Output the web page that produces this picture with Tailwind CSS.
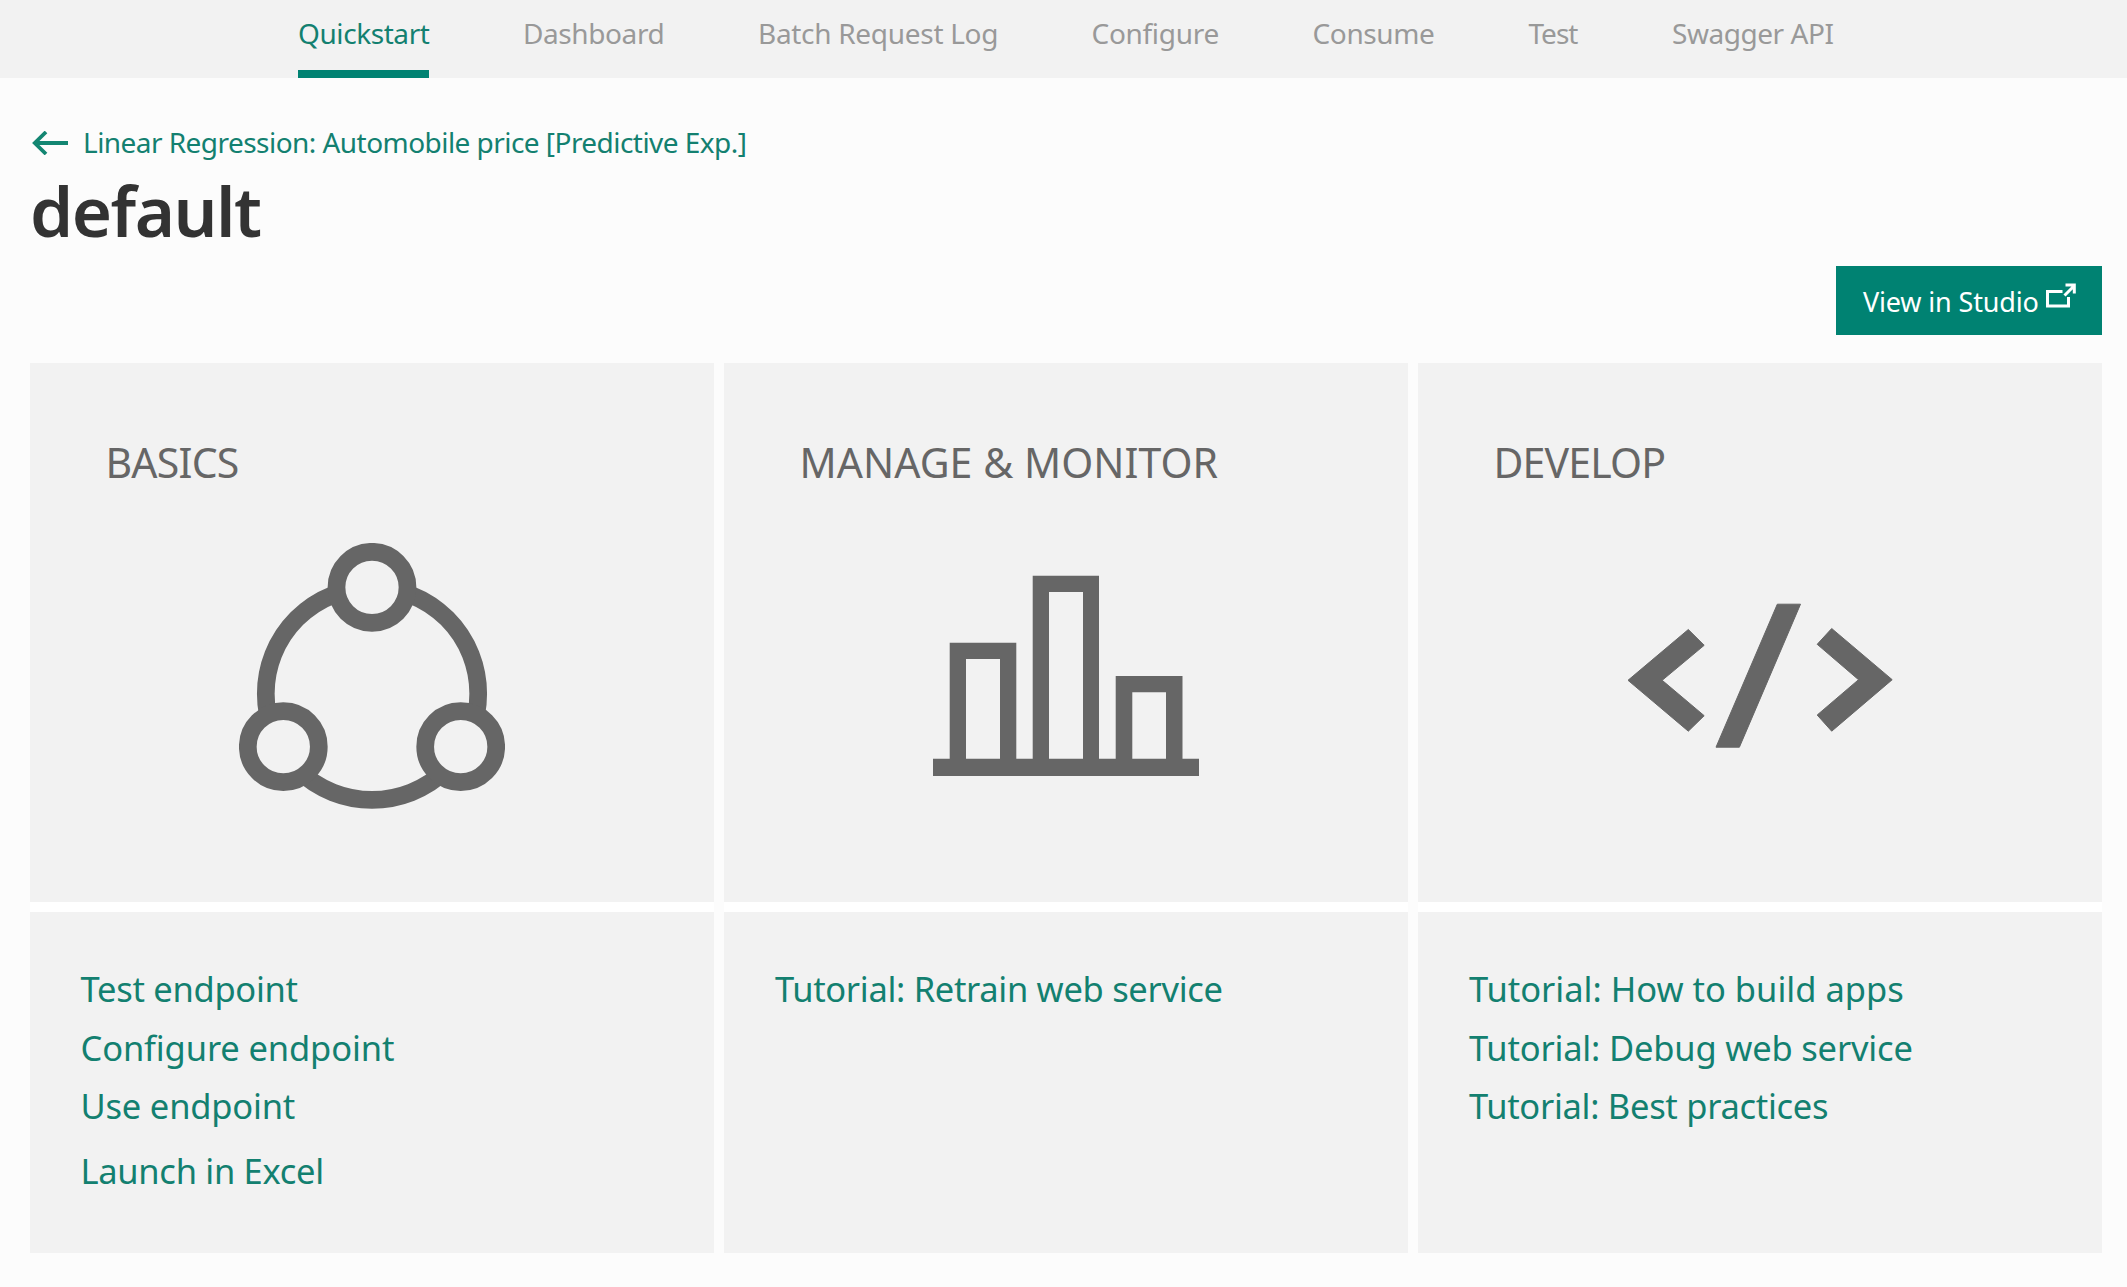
<!DOCTYPE html>
<html lang="en">
<head>
<meta charset="utf-8">
<title>default - Quickstart</title>
<script src="https://cdn.jsdelivr.net/npm/@tailwindcss/browser@4"></script>
</head>
<body class="min-h-screen bg-[#fcfcfc] font-['Noto_Sans',sans-serif] text-[#666666] whitespace-nowrap">
<nav class="grid h-[78px] grid-cols-[225px_235px_333.5px_221px_216px_143.5px_180px] bg-[#f2f2f2] pl-[298px] text-[28px] leading-[67px] text-[#999999]">
  <a class="h-[78px] w-[131px] border-b-8 border-[#008272] tracking-[-0.42px] text-[#138070]">Quickstart</a>
  <a class="tracking-[-0.4px]">Dashboard</a>
  <a class="tracking-[-0.3px]">Batch Request Log</a>
  <a class="tracking-[-0.3px]">Configure</a>
  <a class="tracking-[-0.38px]">Consume</a>
  <a class="tracking-[-1px]">Test</a>
  <a class="tracking-[-0.45px]">Swagger API</a>
</nav>
<main class="pl-[30px] pr-[25px] pt-11">
  <a class="flex h-10 items-center text-[28px] leading-10 tracking-[-0.545px] text-[#138070]">
    <svg class="ml-[2px] mr-[14px] mt-px h-6 w-9" viewBox="0 0 36 24" fill="none" stroke="#138672" stroke-width="3.8"><path d="M36 12H2.5M14 1 2.8 12 14 23"/></svg>
    <span class="pl-px">Linear Regression: Automobile price [Predictive Exp.]</span>
  </a>
  <h1 class="mt-2 h-20 text-[69px] font-semibold leading-[80px] tracking-[-1.5px] text-[#333333]">default</h1>
  <div class="mt-4 flex justify-end">
    <a class="flex h-[69px] w-[266px] bg-[#008272] pl-[27px] text-[27px] leading-[72px] tracking-[-0.16px] text-white">
      <span class="w-[183px]">View in Studio</span>
      <svg class="mt-[17px] h-[26px] w-[30px]" viewBox="0 0 30 26" fill="none" stroke="#fff" stroke-width="3"><path d="M16.5 8.5H1.5V23H22.5V14M18.5 12.5 27.5 3.5M19.5 2H28.3V10.5"/></svg>
    </a>
  </div>
  <div class="mt-7 grid grid-cols-3 gap-[10px]">
    <section class="flex flex-col gap-[10px] bg-white">
      <div class="h-[539px] bg-[#f2f2f2] pt-[71px]">
        <h2 class="pl-[75.5px] text-[41px] leading-[56px] tracking-[-0.78px]">BASICS</h2>
        <svg class="mx-auto mt-[53px] size-[266px]" viewBox="0 0 266 266" fill="#f2f2f2" stroke="#666666" stroke-width="17.7">
          <circle cx="133" cy="150.7" r="106.2"/><circle cx="133" cy="44.3" r="35.5"/><circle cx="44.3" cy="203.7" r="35.5"/><circle cx="221.7" cy="203.7" r="35.5"/>
        </svg>
      </div>
      <div class="flex h-[341px] flex-col bg-[#f2f2f2] pl-[50.5px] pt-12 text-[34.5px] leading-[58.5px] text-[#138070]">
        <a class="tracking-[-0.28px]">Test endpoint</a>
        <a class="tracking-[-0.13px]">Configure endpoint</a>
        <a class="tracking-[-0.2px]">Use endpoint</a>
        <a class="mt-1.5 tracking-[-0.3px]">Launch in Excel</a>
      </div>
    </section>
    <section class="flex flex-col gap-[10px] bg-white">
      <div class="h-[539px] bg-[#f2f2f2] pt-[71px]">
        <h2 class="pl-[75.5px] text-[41px] leading-[56px] tracking-[0.06px]">MANAGE &amp; MONITOR</h2>
        <svg class="mx-auto mt-[53px] size-[266px]" viewBox="0 0 266 266" fill="#666666">
          <path fill-rule="evenodd" d="M0 215.8H16.7V99.7H83.3V215.8H99.7V32.7H166V215.8H182.7V133H249.5V215.8H266V233H0ZM33 116V215.8H67V116ZM116 49V215.8H150V49ZM199.3 149.3V215.8H233V149.3Z"/>
        </svg>
      </div>
      <div class="flex h-[341px] flex-col bg-[#f2f2f2] pl-[51px] pt-12 text-[34.5px] leading-[58.5px] text-[#138070]">
        <a class="tracking-[-0.31px]">Tutorial: Retrain web service</a>
      </div>
    </section>
    <section class="flex flex-col gap-[10px] bg-white">
      <div class="h-[539px] bg-[#f2f2f2] pt-[71px]">
        <h2 class="pl-[75.5px] text-[41px] leading-[56px] tracking-[-0.85px]">DEVELOP</h2>
        <svg class="mx-auto mt-[53px] size-[266px]" viewBox="0 0 266 266" fill="#666666" stroke="#666666" stroke-linejoin="round">
          <path d="M1 137.3 61.3 86.5 77.2 102.3 35.2 137.3 77.2 172.7 61.3 188.2ZM150.3 61.2H173.5L112.4 204.2H89ZM204.7 85.5 265.2 136.7 204.7 188.2 190.2 172 231.5 136.7 190.2 101.3Z"/>
        </svg>
      </div>
      <div class="flex h-[341px] flex-col bg-[#f2f2f2] pl-[51px] pt-12 text-[34.5px] leading-[58.5px] text-[#138070]">
        <a class="tracking-[0px]">Tutorial: How to build apps</a>
        <a class="tracking-[-0.18px]">Tutorial: Debug web service</a>
        <a class="tracking-[-0.29px]">Tutorial: Best practices</a>
      </div>
    </section>
  </div>
</main>
</body>
</html>
